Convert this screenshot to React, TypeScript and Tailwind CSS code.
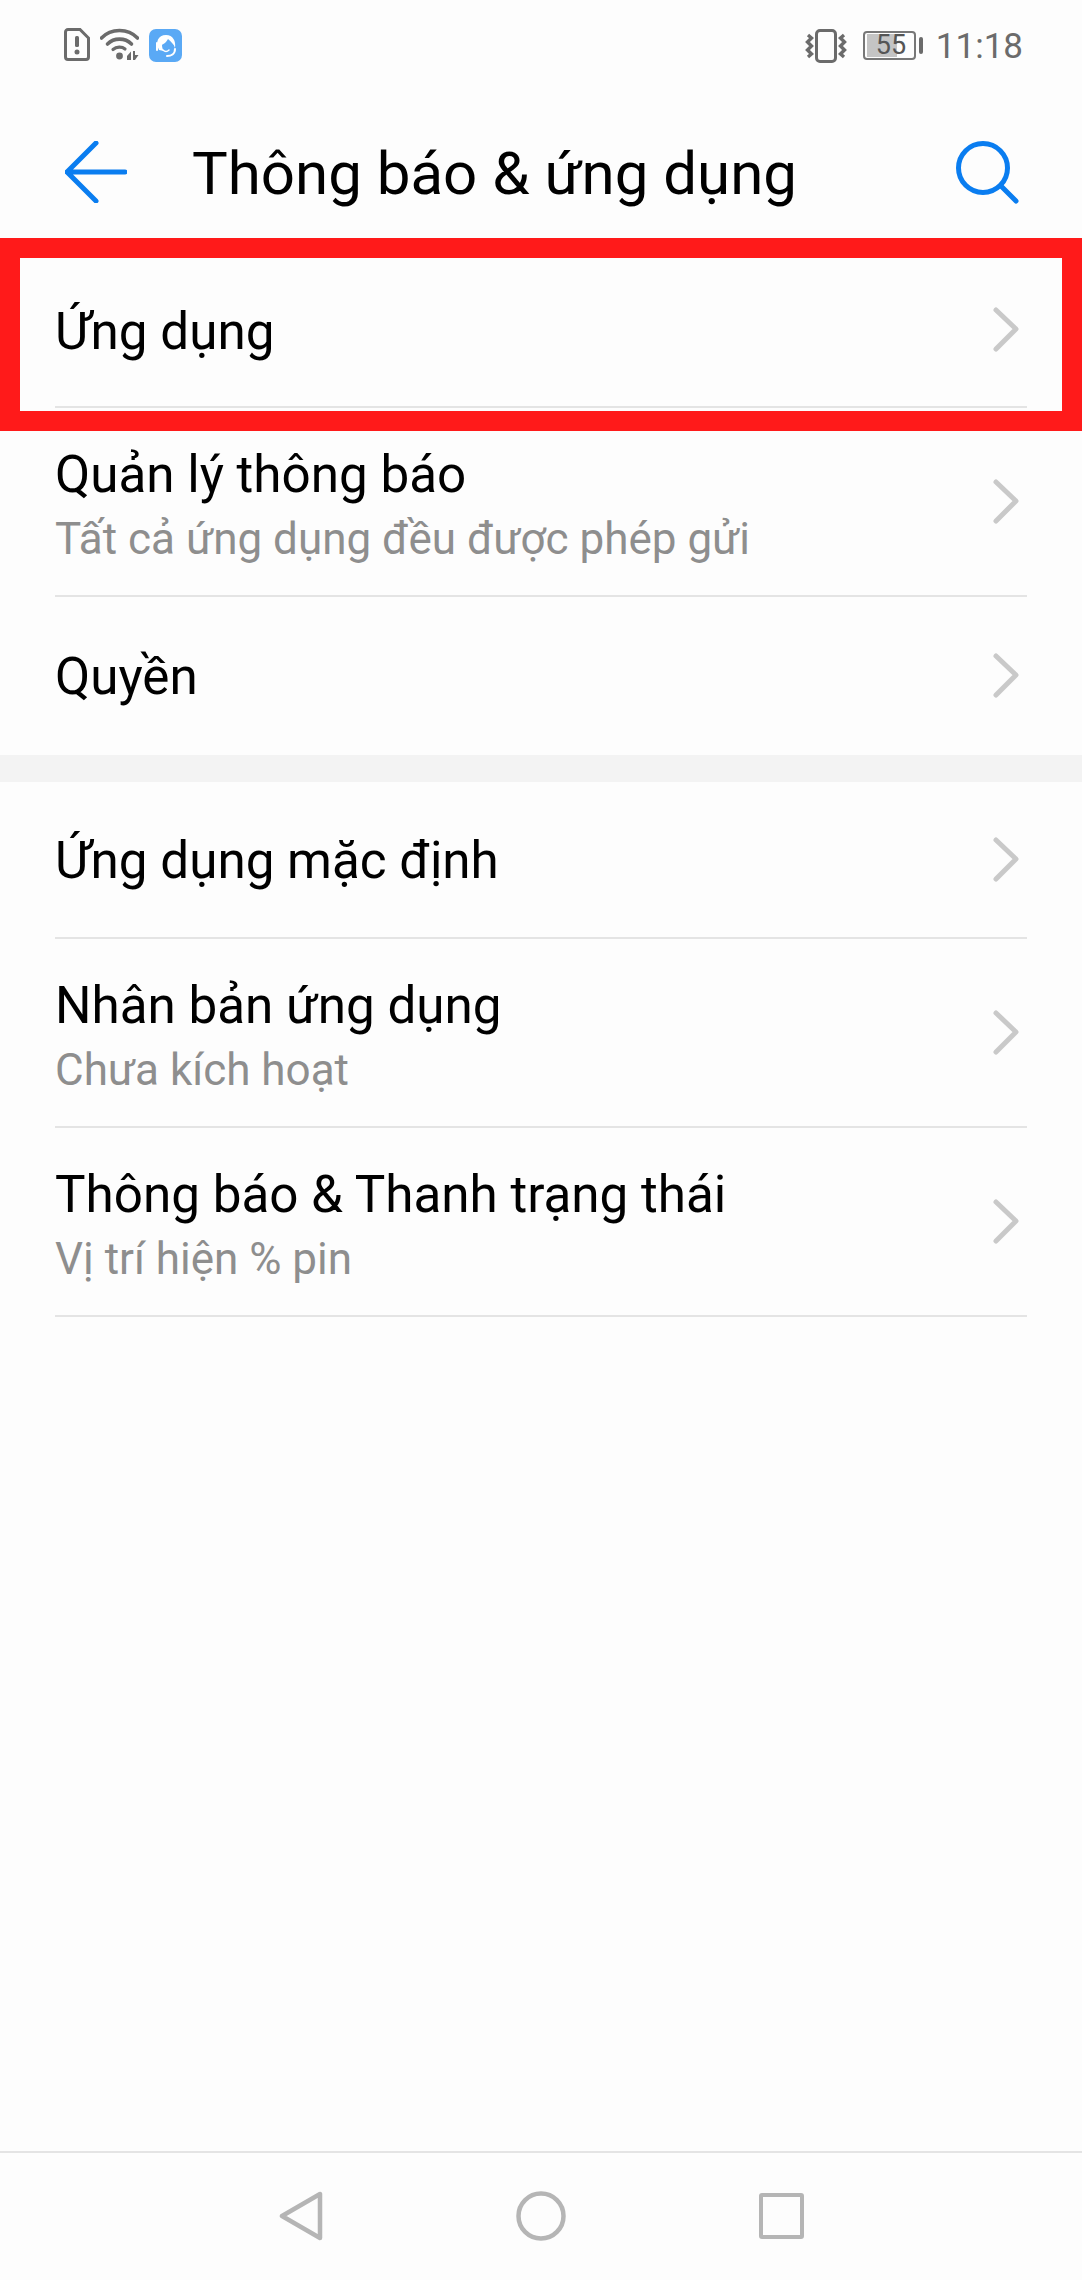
import React from "react";

const font = { fontFamily: "Roboto, 'Noto Sans', sans-serif" };

function Chevron({ lift = false }: { lift?: boolean }) {
  return (
    <svg width="28" height="48" viewBox="0 0 28 48" className={`shrink-0 mr-[7px] ${lift ? "mb-[6px]" : "mb-[2px]"}`} fill="none">
      <path d="M4 5 L24 24 L4 44" stroke="#c9c9c9" strokeWidth="5" strokeLinecap="round" strokeLinejoin="round" />
    </svg>
  );
}

function Row({ title, sub, h, line = true, lift = false }: { title: string; sub?: string; h: string; line?: boolean; lift?: boolean }) {
  return (
    <div className={`mx-[55px] flex items-center justify-between ${h} ${line ? "border-b-2 border-[#e4e4e4]" : ""}`}>
      <div className={`flex flex-col ${!sub && !lift ? "mt-[2px]" : ""}`}>
        <div className="text-[51.2px] leading-[66px] text-black">{title}</div>
        {sub && <div className="mt-[3px] text-[44px] leading-[56px] text-[#8e8e8e] -mb-[6px]">{sub}</div>}
      </div>
      <Chevron lift={lift} />
    </div>
  );
}

function StatusBar() {
  return (
    <div className="h-[88px] flex items-start justify-between pl-[64px] pr-[59px] pt-[28px]">
      <div className="flex items-start gap-[10px]">
        <svg width="26" height="33" viewBox="0 0 26 33" fill="none">
          <path d="M4 1.5 H16 L24.5 10 V29 a2.5 2.5 0 0 1-2.5 2.5 H4 a2.5 2.5 0 0 1-2.5-2.5 V4 a2.5 2.5 0 0 1 2.5-2.5 Z" stroke="#6b6b6b" strokeWidth="3" />
          <rect x="11" y="8" width="4" height="11" rx="1.5" fill="#6b6b6b" />
          <circle cx="13" cy="24" r="2.5" fill="#6b6b6b" />
        </svg>
        <svg width="39" height="33" viewBox="0 0 39 33" fill="none">
          <path d="M1.5 10 C11 0 28 0 37.5 10" stroke="#6b6b6b" strokeWidth="3.6" strokeLinecap="round" />
          <path d="M7.5 16 C14 9.5 25 9.5 31.5 16" stroke="#6b6b6b" strokeWidth="3.6" strokeLinecap="round" />
          <path d="M13 21.5 C16.5 18.5 22 18.5 25 21" stroke="#6b6b6b" strokeWidth="3.2" strokeLinecap="round" />
          <circle cx="19.5" cy="28" r="3.4" fill="#6b6b6b" />
          <path d="M27 28 L31 23.5 V32 H27 Z M33 23 V32 H35 L38.5 27 H35 V23 Z" fill="#6b6b6b" />
        </svg>
        <div className="w-[33px] h-[33px] rounded-[7px] bg-[#5aa9f5] mt-[1px]">
          <svg width="33" height="33" viewBox="0 0 33 33" fill="none">
            <path d="M10 21 C6 13 9 6 17 6 C24 6 27 12 26 19 C25 15 22 13 19 10 C17 14 14 15 13 16 C13 19 14 21 15 22 Z" fill="#fff" />
            <path d="M8 14 V21 M26 20 C26 25 22 27 18 27" stroke="#fff" strokeWidth="2" strokeLinecap="round" />
            <path d="M14 21 Q17 24 20 21" stroke="#fff" strokeWidth="1.5" strokeLinecap="round" />
          </svg>
        </div>
      </div>
      <div className="flex items-start">
        <svg width="42" height="34" viewBox="0 0 42 34" fill="none" className="mt-[1px]">
          <rect x="11.5" y="1.5" width="19" height="31" rx="3.5" stroke="#6b6b6b" strokeWidth="3" />
          <path d="M3 6 L6.5 9 L2.5 13 L6.5 17 L2.5 21 L6.5 25 L3 28 M39 6 L35.5 9 L39.5 13 L35.5 17 L39.5 21 L35.5 25 L39 28" stroke="#6b6b6b" strokeWidth="3.4" />
        </svg>
        <div className="ml-[16px] mt-[3px] flex items-center">
          <div className="relative w-[53px] h-[29px] rounded-[4px] border-2 border-[#777] flex items-center">
            <div className="h-[23px] w-[30px] ml-[2px] bg-[#c4c4c4]" />
            <div className="absolute left-[11px] top-[-1px] text-[27px] leading-[27px] text-[#555]">55</div>
          </div>
          <div className="ml-[3px] w-[4px] h-[17px] rounded-[2px] bg-[#6b6b6b]" />
        </div>
        <div className="ml-[13px] text-[35px] leading-[34px] text-[#6b6b6b] mt-[2px]">11:18</div>
      </div>
    </div>
  );
}

function Header() {
  return (
    <div className="h-[150px] flex items-start pl-[65px] pr-[63px] pt-[53px]">
      <svg width="62" height="62" viewBox="0 0 62 62" fill="none" className="shrink-0">
        <path d="M31 2 L2 31 L31 60 M2 31 H60" stroke="#0a7df0" strokeWidth="5" strokeLinecap="round" strokeLinejoin="round" />
      </svg>
      <div className="ml-[65px] mt-[2px] flex-1 text-[60px] leading-[62px] text-black whitespace-nowrap">Thông báo &amp; ứng dụng</div>
      <svg width="63" height="63" viewBox="0 0 63 63" fill="none" className="shrink-0">
        <circle cx="27" cy="27" r="24.5" stroke="#0a7df0" strokeWidth="5" />
        <path d="M45 45 L60 60" stroke="#0a7df0" strokeWidth="5" strokeLinecap="round" />
      </svg>
    </div>
  );
}

function NavBar() {
  return (
    <div className="h-[129px] border-t-2 border-[#e4e4e4] flex items-start pt-[38px] pl-[279px]">
      <svg width="44" height="50" viewBox="0 0 44 50" fill="none">
        <path d="M41 3 V47 L3 25 Z" stroke="#b5b5b5" strokeWidth="4.5" strokeLinejoin="round" />
      </svg>
      <svg width="50" height="50" viewBox="0 0 50 50" fill="none" className="ml-[193px]">
        <circle cx="25" cy="25" r="22.5" stroke="#b5b5b5" strokeWidth="4.5" />
      </svg>
      <div className="ml-[193px] mt-[2px] w-[45px] h-[46px] border-[4px] border-[#b5b5b5] rounded-[3px]" />
    </div>
  );
}

export default function App() {
  return (
    <div className="relative w-[1082px] h-[2280px] bg-[#fdfdfd] flex flex-col" style={font}>
      <StatusBar />
      <Header />
      <div className="flex-1 flex flex-col">
        <div className="h-[20px]" />
        <Row title="Ứng dụng" h="h-[150px]" lift />
        <Row title="Quản lý thông báo" sub="Tất cả ứng dụng đều được phép gửi" h="h-[189px]" />
        <Row title="Quyền" h="h-[158px]" line={false} />
        <div className="h-[27px] bg-[#f3f3f3]" />
        <Row title="Ứng dụng mặc định" h="h-[157px]" />
        <Row title="Nhân bản ứng dụng" sub="Chưa kích hoạt" h="h-[189px]" />
        <Row title="Thông báo & Thanh trạng thái" sub="Vị trí hiện % pin" h="h-[189px]" />
      </div>
      <NavBar />
      <div className="absolute left-0 top-[238px] w-[1082px] h-[193px] border-[20px] border-[#ff1a1a] pointer-events-none" />
    </div>
  );
}
